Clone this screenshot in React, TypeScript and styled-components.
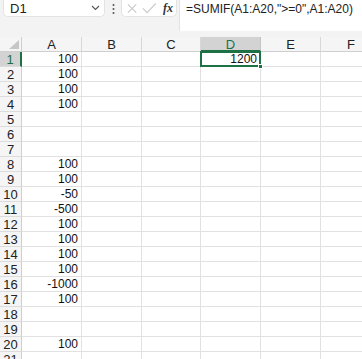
import React from "react";
import styled, { createGlobalStyle } from "styled-components";

const GlobalStyle = createGlobalStyle`
  html, body {
    margin: 0;
    padding: 0;
    background: #ffffff;
    overflow: hidden;
  }
  body {
    font-family: "Liberation Sans", Arial, sans-serif;
  }
`;

const GREEN = "#1e7145";
const GRID = "#e1e1e1";
const HEAD_BG = "#f5f5f5";
const HEAD_SEL = "#d3d3d3";

const columns = ["A", "B", "C", "D", "E", "F"];
const colWidths = [60, 60, 59, 60, 60, 61];

const colA: Record<number, string> = {
  1: "100",
  2: "100",
  3: "100",
  4: "100",
  8: "100",
  9: "100",
  10: "-50",
  11: "-500",
  12: "100",
  13: "100",
  14: "100",
  15: "100",
  16: "-1000",
  17: "100",
  20: "100",
};

const Page = styled.div`
  width: 362px;
  height: 359px;
  overflow: hidden;
  background: #fff;
`;

const TopBar = styled.div`
  display: flex;
  align-items: flex-start;
  height: 37px;
  background: #f3f3f3;
`;

const NameBox = styled.div`
  box-sizing: border-box;
  margin-left: 3px;
  width: 102px;
  height: 17px;
  background: #fff;
  border: 1px solid #e3e3e3;
  border-top: none;
  border-radius: 0 0 5px 5px;
  display: flex;
  align-items: center;
  justify-content: space-between;
  padding: 0 4px 0 6px;
  font-size: 13px;
  color: #222;
`;

const Dots = styled.div`
  width: 16px;
  display: flex;
  justify-content: center;
  padding-top: 3px;
`;

const IconBox = styled.div`
  box-sizing: border-box;
  width: 56px;
  height: 17px;
  background: #fff;
  border: 1px solid #e3e3e3;
  border-top: none;
  border-radius: 0 0 5px 5px;
  display: flex;
  align-items: center;
  gap: 5px;
  padding: 0 3px 0 5px;
`;

const Fx = styled.span`
  font-family: "Liberation Serif", "Times New Roman", serif;
  font-style: italic;
  font-weight: bold;
  font-size: 12px;
  color: #333;
  margin-left: 1px;
`;

const FormulaBox = styled.div`
  flex: 1;
  margin-left: 2px;
  height: 31px;
  background: #fff;
  border-left: 1px solid #e3e3e3;
  font-size: 12px;
  color: #222;
  padding: 2px 0 0 6px;
  box-sizing: border-box;
  white-space: nowrap;
`;

const Sheet = styled.div`
  display: grid;
  grid-template-columns: 22px ${colWidths.map((w) => `${w}px`).join(" ")};
  grid-auto-rows: 15px;
`;

const Corner = styled.div`
  box-sizing: border-box;
  background: ${HEAD_BG};
  border-right: 1px solid #cfcfcf;
  border-bottom: 1px solid #cfcfcf;
  position: relative;
`;

const ColHead = styled.div<{ $sel?: boolean }>`
  box-sizing: border-box;
  background: ${(p) => (p.$sel ? HEAD_SEL : HEAD_BG)};
  border-right: 1px solid ${(p) => (p.$sel ? "#c4c4c4" : "#d8d8d8")};
  border-bottom: ${(p) => (p.$sel ? `2px solid ${GREEN}` : "1px solid #cfcfcf")};
  color: ${(p) => (p.$sel ? GREEN : "#222")};
  font-size: 13px;
  line-height: 15px;
  text-align: center;
`;

const RowHead = styled.div<{ $sel?: boolean }>`
  box-sizing: border-box;
  background: ${(p) => (p.$sel ? HEAD_SEL : HEAD_BG)};
  border-right: ${(p) => (p.$sel ? `2px solid ${GREEN}` : "1px solid #cfcfcf")};
  border-bottom: 1px solid #dcdcdc;
  color: ${(p) => (p.$sel ? GREEN : "#222")};
  font-size: 13px;
  line-height: 15px;
  text-align: center;
`;

const Cell = styled.div`
  box-sizing: border-box;
  border-right: 1px solid ${GRID};
  border-bottom: 1px solid ${GRID};
  font-size: 12px;
  line-height: 14px;
  text-align: right;
  padding-right: 3px;
  color: #111;
  white-space: nowrap;
  overflow: visible;
`;

const ActiveCell = styled(Cell)`
  position: relative;
  border: 2px solid ${GREEN};
  margin: -1px 0 0 -1px;
  line-height: 12px;
  padding-right: 2px;
  &::after {
    content: "";
    position: absolute;
    right: -4px;
    bottom: -4px;
    width: 5px;
    height: 5px;
    background: ${GREEN};
    border: 1px solid #fff;
    box-sizing: border-box;
  }
`;

const Check = () => (
  <svg width="16" height="12" viewBox="0 0 16 12">
    <path d="M1 6.5 L5.5 11 L15 1" fill="none" stroke="#c8c8c8" strokeWidth="1.2" />
  </svg>
);

const Cross = () => (
  <svg width="11" height="11" viewBox="0 0 11 11">
    <path d="M1 1 L10 10 M10 1 L1 10" fill="none" stroke="#c8c8c8" strokeWidth="1.2" />
  </svg>
);

const App: React.FC = () => {
  const rows = Array.from({ length: 21 }, (_, i) => i + 1);
  return (
    <Page>
      <GlobalStyle />
      <TopBar>
        <NameBox>
          <span>D1</span>
          <svg width="9" height="6" viewBox="0 0 9 6">
            <path d="M1 1 L4.5 4.5 L8 1" fill="none" stroke="#555" strokeWidth="1.1" />
          </svg>
        </NameBox>
        <Dots>
          <svg width="3" height="12" viewBox="0 0 3 12">
            <circle cx="1.5" cy="2" r="1" fill="#555" />
            <circle cx="1.5" cy="6" r="1" fill="#555" />
            <circle cx="1.5" cy="10" r="1" fill="#555" />
          </svg>
        </Dots>
        <IconBox>
          <Cross />
          <Check />
          <Fx>fx</Fx>
        </IconBox>
        <FormulaBox>=SUMIF(A1:A20,"&gt;=0",A1:A20)</FormulaBox>
      </TopBar>
      <Sheet>
        <Corner>
          <svg
            width="10"
            height="9"
            viewBox="0 0 10 9"
            style={{ position: "absolute", right: 2, bottom: 2 }}
          >
            <path d="M10 0 L10 9 L0 9 Z" fill="#c6c6c6" />
          </svg>
        </Corner>
        {columns.map((c) => (
          <ColHead key={c} $sel={c === "D"}>
            {c}
          </ColHead>
        ))}
        {rows.map((r) => (
          <React.Fragment key={r}>
            <RowHead $sel={r === 1}>{r}</RowHead>
            {columns.map((c) =>
              c === "D" && r === 1 ? (
                <ActiveCell key={c}>1200</ActiveCell>
              ) : (
                <Cell key={c}>{c === "A" ? colA[r] ?? "" : ""}</Cell>
              )
            )}
          </React.Fragment>
        ))}
      </Sheet>
    </Page>
  );
};

export default App;
